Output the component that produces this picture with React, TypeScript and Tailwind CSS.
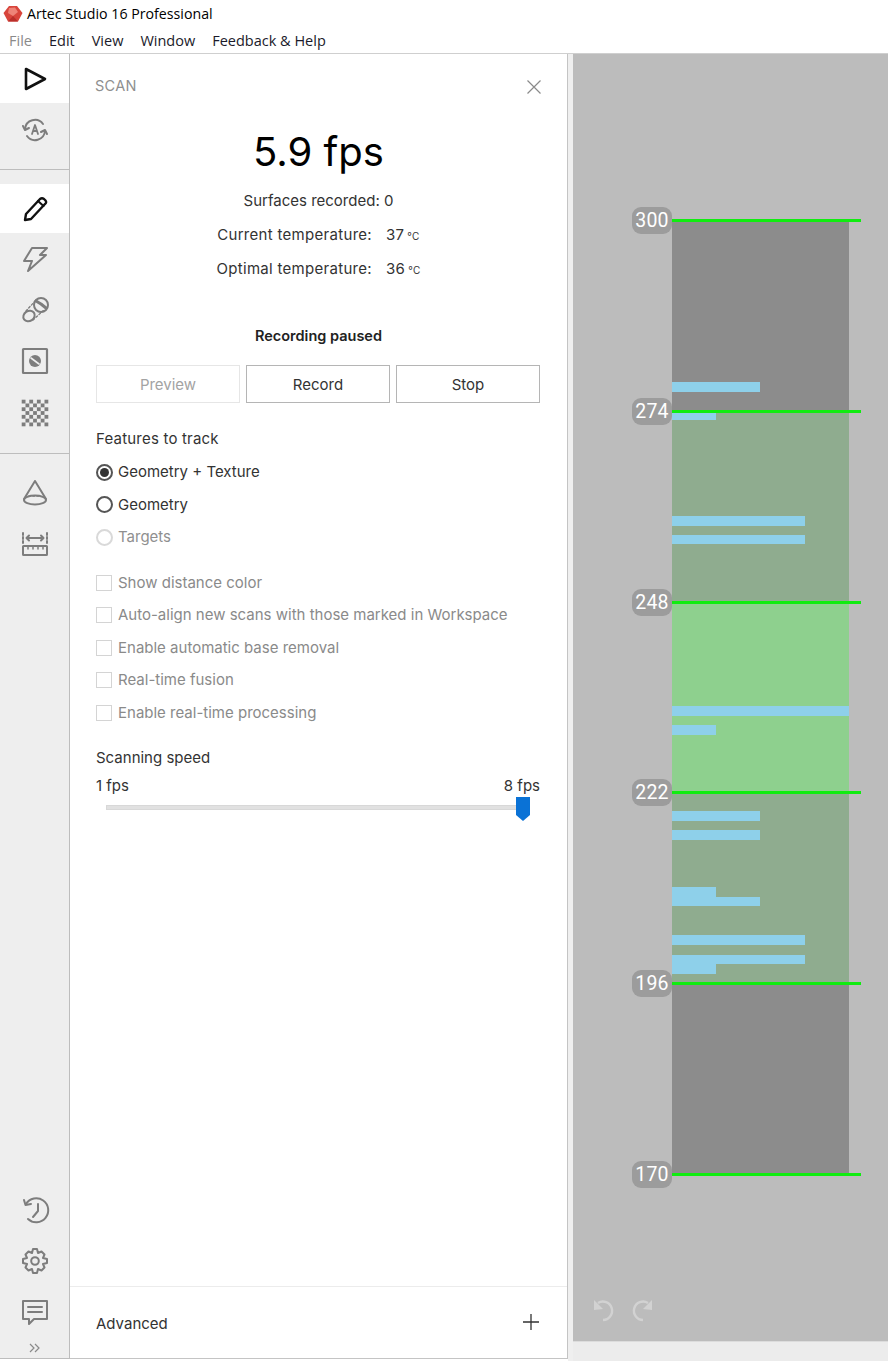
import React from 'react';

const BODY = "font-['Inter',sans-serif]";

const stroke = { fill: 'none', stroke: 'currentColor', strokeWidth: 2, strokeLinejoin: 'round' as const, strokeLinecap: 'round' as const };

function Logo() {
  return (
    <svg width="20" height="18" viewBox="0 0 20 18" className="shrink-0">
      <polygon points="6,1 14,1 19.5,8 15,16.5 5,16.5 0.5,8" fill="#d8453c" />
      <polygon points="6,3 12,2.5 15,7 10,11 5,8" fill="#ee8478" />
      <polygon points="5,16.5 10,11 15,16.5" fill="#b92f2a" />
    </svg>
  );
}

function RailIcon({ children, active, h = 'h-[51px]' }: { children: React.ReactNode; active?: boolean; h?: string }) {
  return (
    <div className={`${h} flex items-center justify-center ${active ? 'bg-white text-[#111]' : 'text-[#7d7d7d]'}`}>
      <svg width="30" height="30" viewBox="0 0 30 30" {...stroke}>{children}</svg>
    </div>
  );
}

function RadioRow({ label, checked, disabled }: { label: string; checked?: boolean; disabled?: boolean }) {
  return (
    <div className={`flex items-center h-[32.5px] gap-[5px] ${disabled ? 'text-[#8f8f8f]' : 'text-[#333]'}`}>
      <span className={`w-[17px] h-[17px] rounded-full border-2 flex items-center justify-center ${disabled ? 'border-[#d9d9d9] border' : 'border-[#555]'}`}>
        {checked && <span className="w-[9px] h-[9px] rounded-full bg-[#333]" />}
      </span>
      <span>{label}</span>
    </div>
  );
}

function CheckRow({ label }: { label: string }) {
  return (
    <div className="flex items-center h-[32.5px] gap-[6px] text-[#8a8a8a]">
      <span className="w-[16px] h-[16px] border border-[#d4d4d4]" />
      <span>{label}</span>
    </div>
  );
}

const ticks = [
  { label: '300', y: 0 },
  { label: '274', y: 191 },
  { label: '248', y: 382 },
  { label: '222', y: 572 },
  { label: '196', y: 763 },
  { label: '170', y: 954 },
];

// top, height, width relative to the gauge column
const bars = [
  [162, 10, 88],
  [193, 7, 44],
  [296, 10, 133],
  [315, 9, 133],
  [486, 10, 177],
  [505, 10, 44],
  [591, 10, 88],
  [610, 10, 88],
  [667, 10, 44],
  [677, 9, 88],
  [715, 10, 133],
  [735, 9, 133],
  [744, 10, 44],
];

// 7x7 checker cells for the texture icon
const checker = Array.from({ length: 49 }, (_, i) => [i % 7, Math.floor(i / 7)]).filter(([c, r]) => (c + r) % 2 === 0);

function Gauge() {
  return (
    <div className="relative w-[177px] h-[954px] flex flex-col">
      <div className="h-[191px] bg-[#8c8c8c]" />
      <div className="h-[191px] bg-[#8fac8f]" />
      <div className="h-[190px] bg-[#8ed08e]" />
      <div className="h-[191px] bg-[#8fac8f]" />
      <div className="h-[191px] bg-[#8c8c8c]" />
      {bars.map(([top, height, width], i) => (
        <div key={i} className="absolute left-0 bg-[#8ed0ea]" style={{ top, height, width }} />
      ))}
      {ticks.map((t) => (
        <React.Fragment key={t.label}>
          <div className="absolute left-0 w-[189px] h-[3px] -mt-[1px] bg-[#10ec10]" style={{ top: t.y }} />
          <div
            className="absolute left-[-40px] w-[40px] h-[27px] -mt-[13px] rounded-[9px] bg-[#9c9c9c] text-white text-[19.5px] flex items-center justify-center font-['Roboto',sans-serif] tracking-[0.2px]"
            style={{ top: t.y }}
          >
            {t.label}
          </div>
        </React.Fragment>
      ))}
    </div>
  );
}

export default function App() {
  return (
    <div className={`w-[888px] h-[1361px] flex flex-col bg-white overflow-hidden ${BODY} text-[15px]`}>
      <div className="h-[28px] flex items-center pl-[3px] gap-[4px] text-[14.2px] text-black font-['Open_Sans',sans-serif]">
        <Logo />
        <span>Artec Studio 16 Professional</span>
      </div>
      <div className="h-[26px] flex items-center pl-[9px] gap-[17px] text-[14.5px] text-[#1a1a2a] font-['Open_Sans',sans-serif] border-b border-[#cfcfcf]">
        <span className="text-[#8a8a8a]">File</span>
        <span>Edit</span>
        <span>View</span>
        <span>Window</span>
        <span>Feedback &amp; Help</span>
      </div>

      <div className="flex-1 flex min-h-0">
        <div className="w-[70px] shrink-0 bg-[#eeeeee] border-r border-b border-[#bdbdbd] mb-[2px] flex flex-col">
          <RailIcon active h="h-[49px]">
            <path d="M6 5 L25 15 L6 25 Z" strokeWidth="2.6" />
          </RailIcon>
          <RailIcon h="h-[54px]">
            <path d="M5 14 A10 10 0 0 1 23 9" />
            <path d="M25 16 A10 10 0 0 1 7 21" />
            <path d="M3 11 L5 15 L9 13" />
            <path d="M27 19 L25 15 L21 17" />
            <path d="M12 19 L15 10 L18 19 M13 16 H17" strokeWidth="1.8" />
          </RailIcon>
          <div className="h-[12px]" />
          <div className="h-[1px] bg-[#bdbdbd]" />
          <div className="h-[14px]" />
          <RailIcon active h="h-[49px]">
            <path d="M6 20 L20 5 Q22 3.5 24 5 L25.5 6.5 Q27 8.5 25 10 L11 25 L5 26 Z" strokeWidth="2.4" />
            <path d="M18 7 L23.5 12" strokeWidth="2" />
          </RailIcon>
          <RailIcon>
            <path d="M12 4 H27 L20 11 H26 L8 27 L12 17 H4 Z" />
          </RailIcon>
          <RailIcon>
            <ellipse cx="9" cy="21" rx="6" ry="5" transform="rotate(-35 9 21)" />
            <circle cx="21" cy="10" r="7" />
            <path d="M16 6 L21 9 L26 13" strokeWidth="3" />
            <path d="M6 16 L16 5 M13 25 L24 15" strokeDasharray="2 2" strokeWidth="1.3" />
          </RailIcon>
          <RailIcon h="h-[52px]">
            <rect x="3" y="3" width="24" height="24" rx="0.5" strokeWidth="2.2" />
            <circle cx="15" cy="15" r="6" fill="currentColor" stroke="none" />
            <path d="M11 12 L19 18" stroke="#eeeeee" strokeWidth="1.6" />
          </RailIcon>
          <RailIcon h="h-[52px]">
            {checker.map(([c, r]) => (
              <rect key={`${c}-${r}`} x={1.7 + c * 3.8} y={1.7 + r * 3.8} width="3.8" height="3.8" fill="currentColor" stroke="none" />
            ))}
          </RailIcon>
          <div className="h-[14px]" />
          <div className="h-[1px] bg-[#bdbdbd]" />
          <div className="h-[13px]" />
          <RailIcon>
            <path d="M15 3 L26 21 M15 3 L4 21" />
            <ellipse cx="15" cy="22" rx="11" ry="4.5" />
            <path d="M9 18 H21" strokeDasharray="1.5 2.5" strokeWidth="1.6" />
          </RailIcon>
          <RailIcon>
            <path d="M3 4 V14 M27 4 V14" strokeDasharray="2 2" />
            <path d="M7 9 H23 M9 6.5 L6.5 9 L9 11.5 M21 6.5 L23.5 9 L21 11.5" />
            <rect x="3" y="17" width="24" height="9" rx="0.5" />
            <path d="M8 17 V20 M13 17 V20 M18 17 V20 M23 17 V20" strokeWidth="1.5" />
          </RailIcon>
          <div className="flex-1" />
          <RailIcon>
            <path d="M6 9 A12 12 0 1 1 8 24" />
            <path d="M4 5 L5.5 10 L11 9" />
            <path d="M18 9 V16 L13 22" />
          </RailIcon>
          <RailIcon>
            <path d="M13 3 H17 L18 7 L21.5 5.5 L24.5 8.5 L23 12 L27 13 V17 L23 18 L24.5 21.5 L21.5 24.5 L18 23 L17 27 H13 L12 23 L8.5 24.5 L5.5 21.5 L7 18 L3 17 V13 L7 12 L5.5 8.5 L8.5 5.5 L12 7 Z" />
            <circle cx="15" cy="15" r="3.8" />
          </RailIcon>
          <RailIcon h="h-[52px]">
            <path d="M3 4 H27 V22 H14 L9 27 V22 H3 Z" />
            <path d="M8 10 H22 M8 15 H22" />
          </RailIcon>
          <div className="h-[20px] flex items-center justify-center text-[#8a8a8a]">
            <svg width="12" height="10" viewBox="0 0 12 10" fill="none" stroke="currentColor" strokeWidth="1.2">
              <path d="M1 1 L5 5 L1 9 M6 1 L10 5 L6 9" />
            </svg>
          </div>
        </div>

        <div className="w-[498px] shrink-0 bg-white border-r border-b border-[#c4c4c4] mb-[2px] flex flex-col">
          <div className="flex items-center justify-between h-[64px] pl-[25px] pr-[25px]">
            <span className="text-[14.5px] tracking-[0.3px] text-[#8f8f8f]">SCAN</span>
            <svg width="16" height="16" viewBox="0 0 16 16" stroke="#8a8a8a" strokeWidth="1.2" className="mt-[2px]">
              <path d="M1.5 1.5 L14.5 14.5 M14.5 1.5 L1.5 14.5" />
            </svg>
          </div>
          <div className="text-center text-[40px] leading-[46px] text-black mt-[11px]">5.9 fps</div>
          <div className="mt-[9px] flex flex-col items-center text-[#333]">
            <div className="h-[34px] leading-[34px]">Surfaces recorded: 0</div>
            <div className="h-[34px] leading-[34px] tracking-[0.3px]">
              Current temperature:<span className="ml-[14px]">37</span>
              <span className="ml-[3px] text-[10px]">°C</span>
            </div>
            <div className="h-[32.5px] leading-[34px] tracking-[0.3px]">
              Optimal temperature:<span className="ml-[14px]">36</span>
              <span className="ml-[3px] text-[10px]">°C</span>
            </div>
          </div>
          <div className="mt-[41px] text-center font-semibold text-[14.5px] text-[#222] leading-[20px]">Recording paused</div>
          <div className="mt-[19.5px] px-[26px] flex gap-[6px] text-center">
            <div className="w-[144px] h-[38px] pt-[2px] flex items-center justify-center border border-[#e6e6e6] text-[#a3a3a3]">Preview</div>
            <div className="w-[144px] h-[38px] pt-[2px] flex items-center justify-center border border-[#b5b5b5] text-[#333]">Record</div>
            <div className="w-[144px] h-[38px] pt-[2px] flex items-center justify-center border border-[#b5b5b5] text-[#333]">Stop</div>
          </div>
          <div className="mt-[26px] pl-[26px] pr-[27px]">
            <div className="text-[#333] leading-[20px] tracking-[0.2px]">Features to track</div>
            <div className="mt-[7px]">
              <RadioRow label="Geometry + Texture" checked />
              <RadioRow label="Geometry" />
              <RadioRow label="Targets" disabled />
            </div>
            <div className="mt-[13px]">
              <CheckRow label="Show distance color" />
              <CheckRow label="Auto-align new scans with those marked in Workspace" />
              <CheckRow label="Enable automatic base removal" />
              <CheckRow label="Real-time fusion" />
              <CheckRow label="Enable real-time processing" />
            </div>
            <div className="mt-[18.5px] text-[#333] leading-[20px]">Scanning speed</div>
            <div className="mt-[8px] flex justify-between text-[#333] leading-[20px]">
              <span>1 fps</span>
              <span>8 fps</span>
            </div>
            <div className="relative h-[26px] mx-[10px] mt-[1px]">
              <div className="absolute left-0 right-0 top-[8px] h-[5px] bg-[#e1e1e1] border border-[#d8d8d8]" />
              <svg width="14" height="24" viewBox="0 0 14 24" className="absolute right-0 top-0">
                <path d="M0 0 H14 V18 L7 24 L0 18 Z" fill="#0a72d6" />
              </svg>
            </div>
          </div>
          <div className="flex-1" />
          <div className="h-[72px] border-t border-[#ececec] pl-[26px] pr-[27px] flex items-center justify-between text-[#333]">
            <span className="pt-[4px]">Advanced</span>
            <svg width="18" height="18" viewBox="0 0 18 18" stroke="#333" strokeWidth="1.3" className="mb-[2px]">
              <path d="M9 1 V17 M1 9 H17" />
            </svg>
          </div>
        </div>

        <div className="w-[5px] shrink-0 bg-[#efefef]" />

        <div className="flex-1 flex flex-col min-w-0">
          <div className="h-[1287px] bg-[#bcbcbc] relative pl-[99px] pt-[166px]">
            <Gauge />
            <div className="absolute left-[19px] bottom-[19px] flex gap-[14px] text-[#d2d2d2]">
              <svg width="24" height="24" viewBox="0 0 24 24" fill="none" stroke="currentColor" strokeWidth="2.4">
                <path d="M6 5 A9.2 9.2 0 1 1 11 22" />
                <path d="M2 2 L2 12 L11 11 Z" fill="currentColor" stroke="none" />
              </svg>
              <svg width="24" height="24" viewBox="0 0 24 24" fill="none" stroke="currentColor" strokeWidth="2.4">
                <path d="M18 5 A9.2 9.2 0 1 0 13 22" />
                <path d="M22 2 L22 12 L13 11 Z" fill="currentColor" stroke="none" />
              </svg>
            </div>
          </div>
          <div className="flex-1 bg-[#ececec] border-t border-[#dcdcdc]" />
        </div>
      </div>
    </div>
  );
}
